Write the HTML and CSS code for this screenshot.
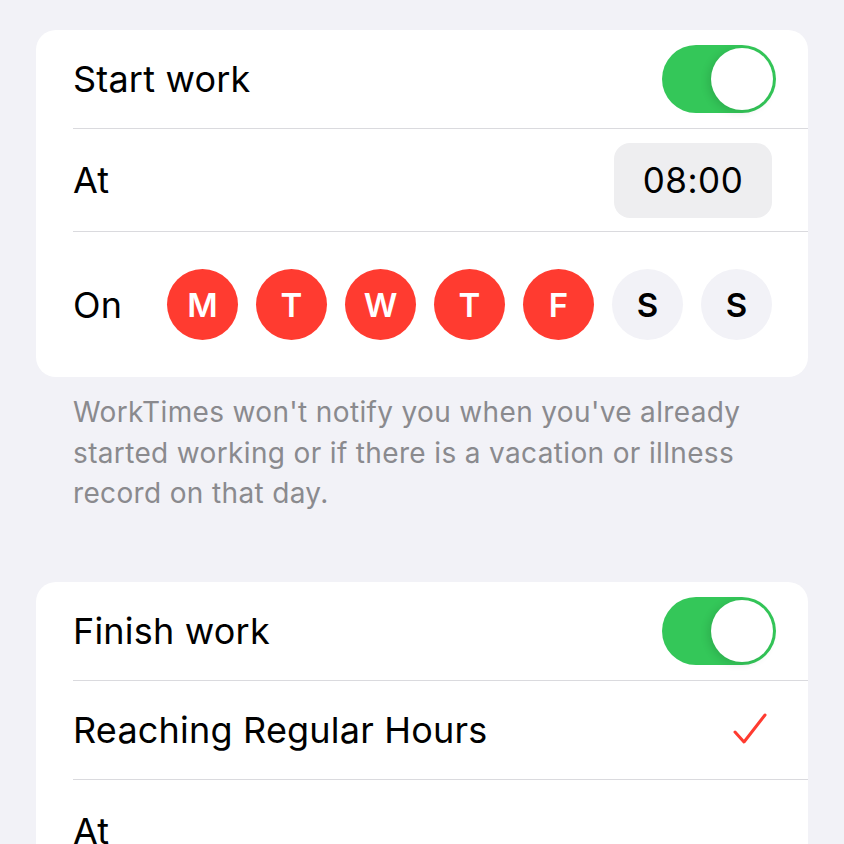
FILE: index.html
```html
<!DOCTYPE html>
<html lang="en">
<head>
    <meta charset="UTF-8">
    <meta name="viewport" content="width=device-width, initial-scale=1.0">
    <title>Notifications</title>
    <link rel="stylesheet" href="styles.css">
</head>
<body>
    <!-- Start work reminder -->
    <section class="group">
        <div class="card">
            <div class="row row-toggle">
                <span class="label">Start work</span>
                <span class="switch on"><span class="knob"></span></span>
            </div>
            <div class="row row-time">
                <span class="label">At</span>
                <span class="time-pill">08:00</span>
            </div>
            <div class="row row-days">
                <span class="label">On</span>
                <div class="days">
                    <span class="day active">M</span>
                    <span class="day active">T</span>
                    <span class="day active">W</span>
                    <span class="day active">T</span>
                    <span class="day active">F</span>
                    <span class="day">S</span>
                    <span class="day">S</span>
                </div>
            </div>
        </div>
        <p class="footer">WorkTimes won't notify you when you've already started working or if there is a vacation or illness record on that day.</p>
    </section>

    <!-- Finish work reminder -->
    <section class="group">
        <div class="card">
            <div class="row row-toggle">
                <span class="label">Finish work</span>
                <span class="switch on"><span class="knob"></span></span>
            </div>
            <div class="row row-option">
                <span class="label">Reaching Regular Hours</span>
                <svg class="check" width="36" height="36" viewBox="0 0 36 36">
                    <path d="M3 20 L12 30 L33 3" fill="none" stroke="#ff3b30" stroke-width="3" stroke-linecap="round" stroke-linejoin="round"/>
                </svg>
            </div>
            <div class="row row-time">
                <span class="label">At</span>
            </div>
        </div>
    </section>
</body>
</html>
```

FILE: styles.css
```css
body {
    margin: 0;
    padding: 30px 36px;
    background-color: #f2f2f7;
    font-family: 'Inter', 'Roboto', sans-serif;
    color: #000000;
}

.group {
    margin-bottom: 68px;
}

.card {
    background-color: #ffffff;
    border-radius: 20px;
    overflow: hidden;
}

.row {
    display: flex;
    align-items: center;
    justify-content: space-between;
    margin-left: 37px;
    padding-right: 36px;
    border-bottom: 1px solid #dadade;
}

.row:last-child {
    border-bottom: none;
}

.label {
    font-size: 36px;
    letter-spacing: 0.2px;
}

.row-toggle {
    height: 98px;
    padding-right: 32px;
}

.row-time {
    height: 102px;
}

.row-days {
    height: 145px;
}

.row-option {
    height: 98px;
    padding-right: 40px;
}

/* green iOS style switch */
.switch {
    width: 114px;
    height: 68px;
    border-radius: 34px;
    background-color: #e9e9eb;
    position: relative;
}

.switch.on {
    background-color: #34c759;
}

.knob {
    position: absolute;
    top: 3px;
    right: 3px;
    width: 62px;
    height: 62px;
    border-radius: 50%;
    background-color: #ffffff;
    box-shadow: -3px 2px 8px rgba(0, 0, 0, 0.12);
}

.time-pill {
    background-color: #eeeef0;
    border-radius: 16px;
    font-size: 35px;
    width: 158px;
    height: 75px;
    display: flex;
    align-items: center;
    justify-content: center;
    letter-spacing: 0.5px;
}

.days {
    display: flex;
    gap: 18px;
}

.day {
    width: 71px;
    height: 71px;
    border-radius: 50%;
    background-color: #f2f2f7;
    display: flex;
    align-items: center;
    justify-content: center;
    font-size: 33px;
    font-weight: 600;
}

.day.active {
    background-color: #ff3b30;
    color: #ffffff;
}

.footer {
    margin: 15px 37px 0;
    font-size: 28px;
    line-height: 40.5px;
    color: #8a8a8e;
    letter-spacing: 0.35px;
}
```
